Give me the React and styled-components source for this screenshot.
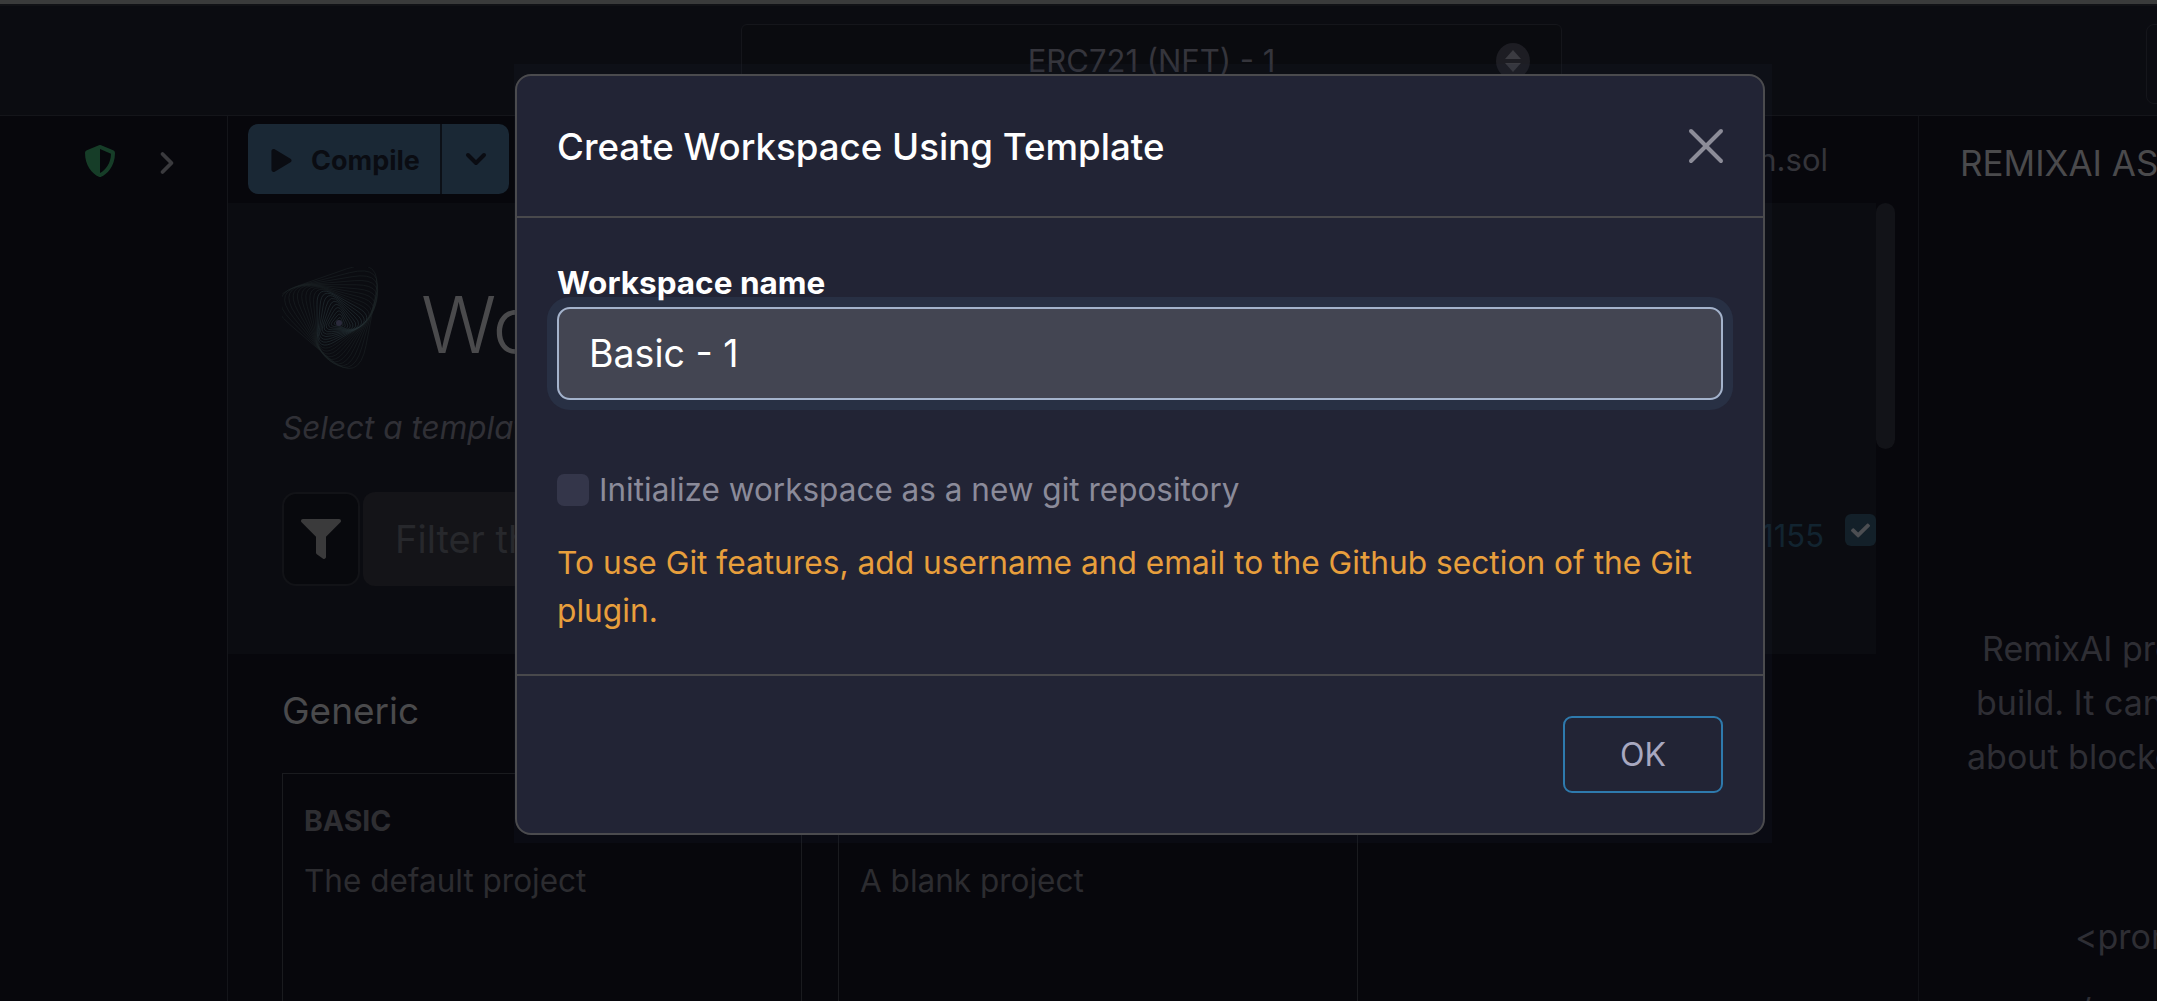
import styled, { createGlobalStyle } from "styled-components"
import { FaShieldAlt, FaFilter, FaPlay, FaCheck } from "react-icons/fa"
import { ChevronRight, ChevronDown, X } from "lucide-react"

const GlobalStyle = createGlobalStyle`
    html, body {
        margin: 0;
        padding: 0;
        background: #07070c;
    }
    * {
        box-sizing: border-box;
    }
`

const Page = styled.div`
    position: relative;
    width: 2157px;
    height: 1001px;
    overflow: hidden;
    display: flex;
    flex-direction: column;
    background: #07070c;
    font-family: Inter, "Liberation Sans", sans-serif;
`
const TopStrip = styled.div`
    height: 4px;
    flex-shrink: 0;
    background: #3a3b3b;
`
const Header = styled.header`
    height: 112px;
    flex-shrink: 0;
    display: flex;
    align-items: flex-start;
    padding: 18px 0 0 741px;
    background: #0b0c11;
    border-top: 2px solid #111216;
    border-bottom: 1px solid #14151a;
`
const Selector = styled.div`
    width: 821px;
    height: 76px;
    flex-shrink: 0;
    display: flex;
    align-items: center;
    justify-content: center;
    position: relative;
    padding-bottom: 4px;
    border: 1px solid #15161b;
    border-radius: 6px;
    background: #0a0b0f;
    color: #35353c;
    font-size: 31px;
`
const Stepper = styled.span`
    position: absolute;
    right: 31px;
    top: 18px;
    width: 34px;
    height: 36px;
    border-radius: 50%;
    background: #1d1d23;
    display: flex;
    align-items: center;
    justify-content: center;
`
const HeaderBox = styled.div`
    width: 60px;
    height: 80px;
    margin-left: 584px;
    flex-shrink: 0;
    border: 1px solid #15161b;
    border-radius: 8px;
`
const Body = styled.div`
    flex: 1;
    display: flex;
    min-height: 0;
`
const Sidebar = styled.aside`
    width: 228px;
    flex-shrink: 0;
    display: flex;
    align-items: flex-start;
    gap: 33px;
    padding: 29px 0 0 84px;
    border-right: 1px solid #14151a;
    color: #3a3a3e;
`
const Center = styled.main`
    width: 1691px;
    flex-shrink: 0;
    display: flex;
    flex-direction: column;
    border-right: 1px solid #111217;
`
const Toolbar = styled.div`
    height: 87px;
    flex-shrink: 0;
    display: flex;
    align-items: flex-start;
    justify-content: space-between;
    padding: 8px 90px 0 20px;
`
const CompileGroup = styled.div`
    width: 261px;
    height: 70px;
    display: flex;
    border-radius: 10px;
    background: #1a2835;
    color: #0a0c12;
`
const CompileButton = styled.div`
    width: 194px;
    display: flex;
    align-items: center;
    gap: 18px;
    padding: 3px 0 0 22px;
    border-right: 2px solid #0c1017;
    font-size: 27px;
    font-weight: 700;
`
const CompileMenu = styled.div`
    flex: 1;
    display: flex;
    align-items: center;
    justify-content: center;
`
const TabName = styled.span`
    color: #34343a;
    font-size: 31px;
    line-height: 72px;
`
const Upper = styled.div`
    height: 451px;
    flex-shrink: 0;
    display: flex;
`
const UpperContent = styled.div`
    width: 1648px;
    flex-shrink: 0;
    display: flex;
    justify-content: space-between;
    background: #0b0c11;
    padding: 64px 0 0 54px;
`
const Intro = styled.div`
    display: flex;
    flex-direction: column;
`
const TitleRow = styled.div`
    display: flex;
    align-items: center;
    gap: 41px;
    height: 104px;
`
const BigTitle = styled.h1`
    margin: 0;
    padding-top: 10px;
    color: #4a4a4c;
    font-size: 78px;
    font-weight: 300;
    white-space: nowrap;
`
const Subtitle = styled.p`
    margin: 37px 0 0;
    color: #303036;
    font-size: 31.5px;
    font-style: italic;
    line-height: 40px;
`
const FilterRow = styled.div`
    display: flex;
    gap: 3px;
    margin-top: 44px;
`
const FilterButton = styled.div`
    width: 78px;
    height: 94px;
    display: flex;
    align-items: center;
    justify-content: center;
    border: 2px solid #121317;
    border-radius: 14px;
    background: #08090d;
    color: #3a3a3b;
`
const FilterInput = styled.div`
    width: 900px;
    height: 94px;
    display: flex;
    align-items: center;
    padding-left: 32px;
    border-radius: 12px;
    background: #141418;
    color: #27282c;
    font-size: 38px;
`
const ListRow = styled.div`
    display: flex;
    align-items: flex-start;
    gap: 21px;
    padding-top: 247px;
    color: #122430;
    font-size: 31px;
`
const ListLabel = styled.span`
    line-height: 44px;
`
const Check = styled.span`
    width: 31px;
    height: 32px;
    display: flex;
    align-items: center;
    justify-content: center;
    border-radius: 6px;
    background: #132029;
    color: #4c4e52;
`
const ScrollThumb = styled.div`
    width: 19px;
    height: 246px;
    border-radius: 10px;
    background: #121318;
`
const Lower = styled.div`
    flex: 1;
    padding: 35px 0 0 54px;
`
const SectionTitle = styled.h2`
    margin: 0;
    color: #4a4a4c;
    font-size: 37px;
    font-weight: 400;
    line-height: 44px;
`
const Cards = styled.div`
    display: grid;
    grid-template-columns: 520px 520px;
    gap: 36px;
    margin-top: 40px;
`
const Card = styled.div`
    height: 300px;
    padding: 30px 21px;
    border: 1px solid #1a1b1f;
`
const CardName = styled.div`
    color: #2e2e32;
    font-size: 28.5px;
    font-weight: 700;
    line-height: 34px;
`
const CardText = styled.div`
    margin-top: 25px;
    color: #2c2c30;
    font-size: 31.5px;
    line-height: 36px;
`
const Assistant = styled.aside`
    flex: 1;
    min-width: 0;
    overflow: hidden;
    padding: 26px 0 0 41px;
`
const AssistantTitle = styled.div`
    color: #4a4a4c;
    font-size: 35px;
    line-height: 42px;
    white-space: nowrap;
`
const HelpLine = styled.div`
    height: 54px;
    margin-left: ${(p) => p.$indent}px;
    color: #2e2e34;
    font-size: 34px;
    line-height: 54px;
    white-space: nowrap;
`
const HelpText = styled.div`
    margin-top: 438px;
`
const PromptText = styled.div`
    margin-top: 126px;
`
const CommandText = styled.div`
    margin-top: 20px;
`

const ModalHalo = styled.div`
    position: absolute;
    left: 514px;
    top: 64px;
    width: 1258px;
    height: 779px;
    padding: 10px 7px 8px 1px;
    background: rgba(34, 36, 53, 0.16);
`
const Modal = styled.section`
    height: 100%;
    display: flex;
    flex-direction: column;
    border: 2px solid #4b4b4e;
    border-radius: 16px;
    background: #222435;
`
const ModalHeader = styled.div`
    height: 142px;
    flex-shrink: 0;
    display: flex;
    align-items: center;
    justify-content: space-between;
    padding: 0 27px 0 40px;
    border-bottom: 2px solid #49494c;
`
const ModalTitle = styled.h3`
    margin: 0;
    color: #fff;
    font-size: 36.7px;
    font-weight: 500;
`
const CloseButton = styled.span`
    display: flex;
    color: #8c8c98;
`
const ModalBody = styled.div`
    height: 458px;
    flex-shrink: 0;
    padding: 45px 40px 0;
    border-bottom: 2px solid #49494c;
`
const FieldLabel = styled.div`
    color: #fff;
    font-size: 31.5px;
    font-weight: 700;
    line-height: 40px;
`
const NameInput = styled.div`
    height: 93px;
    margin-top: 4px;
    display: flex;
    align-items: center;
    padding-left: 30px;
    border: 2px solid #a4b3cc;
    border-radius: 13px;
    background: #434552;
    box-shadow: 0 0 0 10px #283044;
    color: #fff;
    font-size: 37.5px;
`
const GitRow = styled.label`
    display: flex;
    align-items: center;
    gap: 10px;
    margin-top: 70px;
    color: #8b8b9a;
    font-size: 31.5px;
`
const GitBox = styled.span`
    width: 32px;
    height: 32px;
    border-radius: 7px;
    background: #34364a;
`
const Warning = styled.p`
    margin: 30px 0 0;
    color: #e89f3c;
    font-size: 31.7px;
    line-height: 48px;
`
const ModalFooter = styled.div`
    flex: 1;
    display: flex;
    align-items: center;
    justify-content: flex-end;
    padding: 0 40px 0 0;
`
const OkButton = styled.div`
    width: 160px;
    height: 77px;
    display: flex;
    align-items: center;
    justify-content: center;
    border: 2px solid #2e7aad;
    border-radius: 9px;
    color: #a8a8c0;
    font-size: 32px;
`

// rounded triangles turning in towards a point, for the swirl logo
const triangle = (cx, cy, r, turn) => {
    const pts = [0, 1, 2].map((k) => {
        const a = turn + (k * 2 * Math.PI) / 3
        return [cx + r * Math.cos(a), cy + r * Math.sin(a)]
    })
    const mid = (a, b, t) => [a[0] + (b[0] - a[0]) * t, a[1] + (b[1] - a[1]) * t]
    let d = ""
    pts.forEach((p, k) => {
        const prev = pts[(k + 2) % 3]
        const next = pts[(k + 1) % 3]
        const s = mid(p, prev, 0.3)
        const e = mid(p, next, 0.3)
        d += `${k === 0 ? "M" : "L"}${s[0].toFixed(2)} ${s[1].toFixed(2)}Q${p[0].toFixed(2)} ${p[1].toFixed(2)} ${e[0].toFixed(2)} ${e[1].toFixed(2)}`
    })
    return d + "Z"
}

const SwirlLogo = () => {
    const rings = Array.from({ length: 20 }, (_, i) => i)
    return (
        <svg width="98" height="104" viewBox="0 0 98 104" fill="none">
            {rings.map((i) => (
                <path
                    key={i}
                    d={triangle(
                        52 + i * 0.26,
                        46 + i * 0.5,
                        75 - i * 3.6,
                        -0.86 + i * 0.085
                    )}
                    stroke={i > 9 ? "#2c3c40" : "#1f2629"}
                    strokeWidth="0.5"
                />
            ))}
            <circle cx="57" cy="56" r="3" fill="#2b2b3c" />
        </svg>
    )
}

const StepperIcon = () => (
    <svg width="16" height="22" viewBox="0 0 16 22" fill="#3b3b41">
        <path d="M8 0 16 9H0Z" />
        <path d="M8 22 16 13H0Z" />
    </svg>
)

const App = () => {
    return (
        <Page>
            <GlobalStyle />
            <TopStrip />
            <Header>
                <Selector>
                    ERC721 (NFT) - 1
                    <Stepper>
                        <StepperIcon />
                    </Stepper>
                </Selector>
                <HeaderBox />
            </Header>
            <Body>
                <Sidebar>
                    <FaShieldAlt size={32} color="#163d28" />
                    <ChevronRight size={36} strokeWidth={2.5} />
                </Sidebar>
                <Center>
                    <Toolbar>
                        <CompileGroup>
                            <CompileButton>
                                <FaPlay size={23} />
                                Compile
                            </CompileButton>
                            <CompileMenu>
                                <ChevronDown size={32} strokeWidth={3} />
                            </CompileMenu>
                        </CompileGroup>
                        <TabName>main.sol</TabName>
                    </Toolbar>
                    <Upper>
                        <UpperContent>
                            <Intro>
                                <TitleRow>
                                    <SwirlLogo />
                                    <BigTitle>Workspace Templates</BigTitle>
                                </TitleRow>
                                <Subtitle>Select a template to create a workspace</Subtitle>
                                <FilterRow>
                                    <FilterButton>
                                        <FaFilter size={40} />
                                    </FilterButton>
                                    <FilterInput>Filter the templates</FilterInput>
                                </FilterRow>
                            </Intro>
                            <ListRow>
                                <ListLabel>ERC1155</ListLabel>
                                <Check>
                                    <FaCheck size={19} />
                                </Check>
                            </ListRow>
                        </UpperContent>
                        <ScrollThumb />
                    </Upper>
                    <Lower>
                        <SectionTitle>Generic</SectionTitle>
                        <Cards>
                            <Card>
                                <CardName>BASIC</CardName>
                                <CardText>The default project</CardText>
                            </Card>
                            <Card>
                                <CardName>BLANK</CardName>
                                <CardText>A blank project</CardText>
                            </Card>
                        </Cards>
                    </Lower>
                </Center>
                <Assistant>
                    <AssistantTitle>REMIXAI ASSISTANT</AssistantTitle>
                    <HelpText>
                        <HelpLine $indent={22}>RemixAI provides you personalized</HelpLine>
                        <HelpLine $indent={16}>build. It can break down concepts</HelpLine>
                        <HelpLine $indent={7}>about blockchain technology</HelpLine>
                    </HelpText>
                    <PromptText>
                        <HelpLine $indent={115}>&lt;prompt&gt;</HelpLine>
                    </PromptText>
                    <CommandText>
                        <HelpLine $indent={119}>/generate</HelpLine>
                    </CommandText>
                </Assistant>
            </Body>
            <ModalHalo>
                <Modal>
                    <ModalHeader>
                        <ModalTitle>Create Workspace Using Template</ModalTitle>
                        <CloseButton>
                            <X size={60} strokeWidth={1.6} />
                        </CloseButton>
                    </ModalHeader>
                    <ModalBody>
                        <FieldLabel>Workspace name</FieldLabel>
                        <NameInput>Basic - 1</NameInput>
                        <GitRow>
                            <GitBox />
                            Initialize workspace as a new git repository
                        </GitRow>
                        <Warning>
                            To use Git features, add username and email to the Github section of the Git plugin.
                        </Warning>
                    </ModalBody>
                    <ModalFooter>
                        <OkButton>OK</OkButton>
                    </ModalFooter>
                </Modal>
            </ModalHalo>
        </Page>
    )
}

export default App
